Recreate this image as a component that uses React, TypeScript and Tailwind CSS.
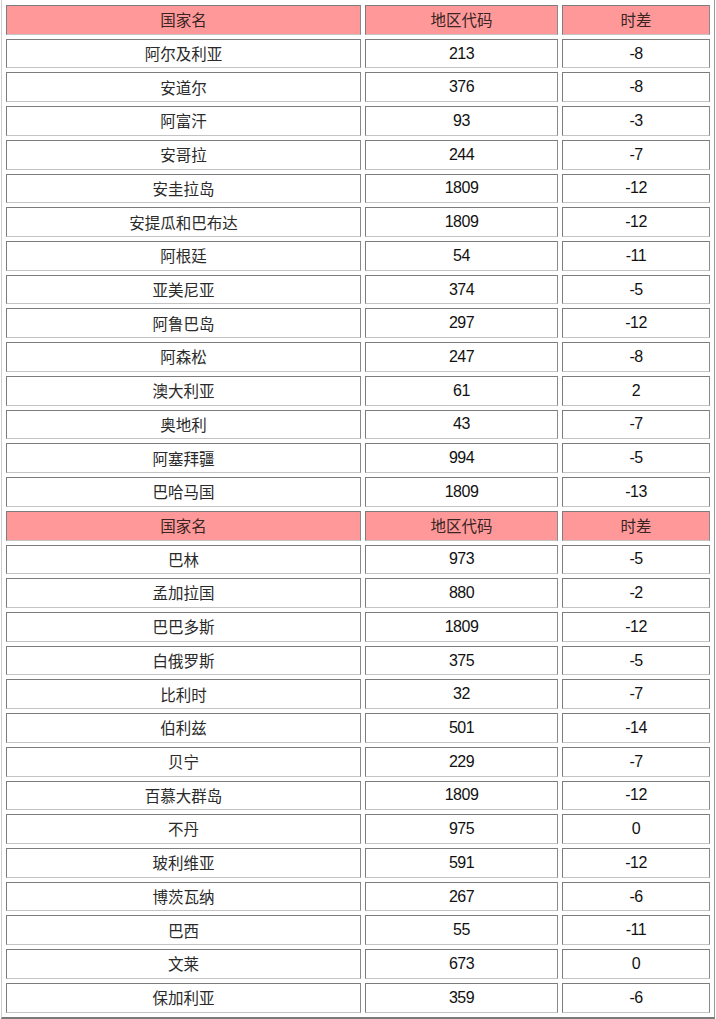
import React from 'react';

type Row = [string, string, string];

const firstPart: Row[] = [
  ['阿尔及利亚', '213', '-8'],
  ['安道尔', '376', '-8'],
  ['阿富汗', '93', '-3'],
  ['安哥拉', '244', '-7'],
  ['安圭拉岛', '1809', '-12'],
  ['安提瓜和巴布达', '1809', '-12'],
  ['阿根廷', '54', '-11'],
  ['亚美尼亚', '374', '-5'],
  ['阿鲁巴岛', '297', '-12'],
  ['阿森松', '247', '-8'],
  ['澳大利亚', '61', '2'],
  ['奥地利', '43', '-7'],
  ['阿塞拜疆', '994', '-5'],
  ['巴哈马国', '1809', '-13'],
];

const secondPart: Row[] = [
  ['巴林', '973', '-5'],
  ['孟加拉国', '880', '-2'],
  ['巴巴多斯', '1809', '-12'],
  ['白俄罗斯', '375', '-5'],
  ['比利时', '32', '-7'],
  ['伯利兹', '501', '-14'],
  ['贝宁', '229', '-7'],
  ['百慕大群岛', '1809', '-12'],
  ['不丹', '975', '0'],
  ['玻利维亚', '591', '-12'],
  ['博茨瓦纳', '267', '-6'],
  ['巴西', '55', '-11'],
  ['文莱', '673', '0'],
  ['保加利亚', '359', '-6'],
];

const cellBase =
  'flex items-center justify-center border border-t-[#7c7c7c] border-l-[#7c7c7c] border-r-[#8a8a8a] border-b-[#c4c4c4]';
const cjk = "font-['Noto_Sans_CJK_SC',sans-serif] text-[15.5px]";
const num = "font-['Liberation_Sans',Arial,sans-serif] text-[16px] tracking-[-0.5px] text-[#111]";

const HeaderRow = () => (
  <>
    <div className={`${cellBase} bg-[#ff9999] ${cjk} text-[#3a2424]`}>国家名</div>
    <div className={`${cellBase} bg-[#ff9999] ${cjk} text-[#3a2424]`}>地区代码</div>
    <div className={`${cellBase} bg-[#ff9999] ${cjk} text-[#3a2424]`}>时差</div>
  </>
);

const DataRow = ({ row }: { row: Row }) => (
  <>
    <div className={`${cellBase} bg-white ${cjk} text-[#2a2a2a]`}>{row[0]}</div>
    <div className={`${cellBase} bg-white ${num}`}>{row[1]}</div>
    <div className={`${cellBase} bg-white ${num}`}>{row[2]}</div>
  </>
);

export default function App() {
  return (
    <div className="min-h-screen bg-white pl-[1px]">
      <div className="w-[714px] border-l border-l-[#cfcfcf] border-r border-r-[#9a9a9a] border-b-2 border-b-[#7a7a7a] px-[4px] pt-[5px] pb-[4px]">
        <div className="grid grid-cols-[355px_193px_148px] auto-rows-[29.72px] gap-x-[4px] gap-y-[4px]">
          <HeaderRow />
          {firstPart.map((r) => (
            <DataRow key={r[0]} row={r} />
          ))}
          <HeaderRow />
          {secondPart.map((r) => (
            <DataRow key={r[0]} row={r} />
          ))}
        </div>
      </div>
    </div>
  );
}
